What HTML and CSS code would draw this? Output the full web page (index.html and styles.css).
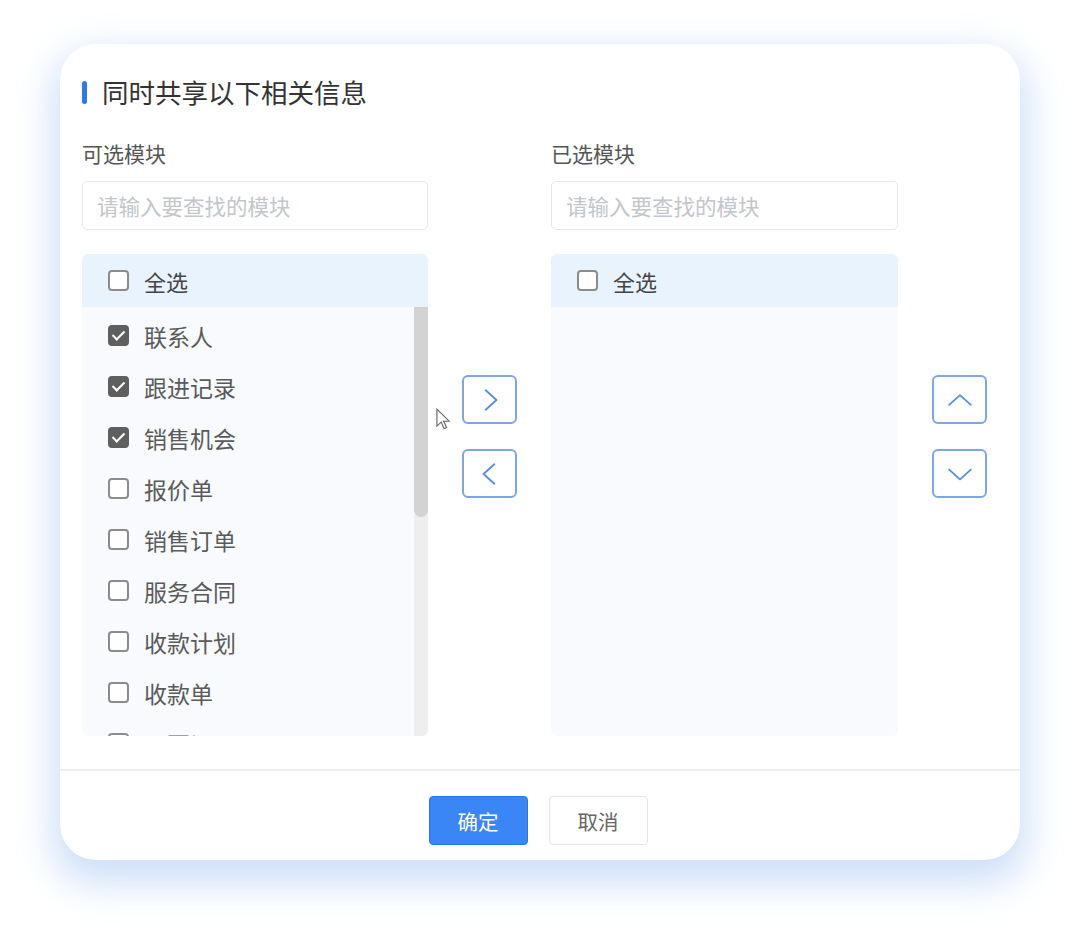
FILE: index.html
```html
<!DOCTYPE html>
<html lang="zh-CN">
<head>
  <meta charset="UTF-8">
  <title>共享信息</title>
  <link rel="stylesheet" href="styles.css">
</head>
<body>

<div class="dialog">
  <div class="dialog-body">
    <h2 class="section-title">同时共享以下相关信息</h2>

    <div class="transfer">
      <!-- 左侧：可选模块 -->
      <div class="panel">
        <div class="panel-label">可选模块</div>
        <input class="search" type="text" placeholder="请输入要查找的模块">
        <div class="list">
          <div class="list-head">
            <span class="check"></span>
            <span>全选</span>
          </div>
          <div class="list-body">
            <div class="rows">
              <div class="row"><span class="check checked"></span><span>联系人</span></div>
              <div class="row"><span class="check checked"></span><span>跟进记录</span></div>
              <div class="row"><span class="check checked"></span><span>销售机会</span></div>
              <div class="row"><span class="check"></span><span>报价单</span></div>
              <div class="row"><span class="check"></span><span>销售订单</span></div>
              <div class="row"><span class="check"></span><span>服务合同</span></div>
              <div class="row"><span class="check"></span><span>收款计划</span></div>
              <div class="row"><span class="check"></span><span>收款单</span></div>
              <div class="row"><span class="check"></span><span>开票记录</span></div>
            </div>
            <div class="scrollbar"><div class="thumb"></div></div>
          </div>
        </div>
      </div>

      <div class="ops">
        <button class="op-btn">
          <svg viewBox="0 0 24 24"><path d="M8 3l10 9-10 9"/></svg>
        </button>
        <button class="op-btn">
          <svg viewBox="0 0 24 24"><path d="M16 3L6 12l10 9"/></svg>
        </button>
        <svg class="cursor" viewBox="0 0 16 24">
          <path d="M1 1v18l4.5-4.2 3.2 7 2.6-1.2-3.1-6.8H14z"/>
        </svg>
      </div>

      <!-- 右侧：已选模块 -->
      <div class="panel">
        <div class="panel-label">已选模块</div>
        <input class="search" type="text" placeholder="请输入要查找的模块">
        <div class="list">
          <div class="list-head">
            <span class="check"></span>
            <span>全选</span>
          </div>
          <div class="list-body"></div>
        </div>
      </div>

      <div class="ops">
        <button class="op-btn">
          <svg viewBox="0 0 24 24"><path d="M2 16.5l10-9 10 9"/></svg>
        </button>
        <button class="op-btn">
          <svg viewBox="0 0 24 24"><path d="M2 8l10 9 10-9"/></svg>
        </button>
      </div>
    </div>
  </div>

  <div class="dialog-footer">
    <button class="btn btn-primary">确定</button>
    <button class="btn">取消</button>
  </div>
</div>

</body>
</html>
```

FILE: styles.css
```css
body {
  margin: 0;
  padding: 44px 0 74px 60px;
  min-height: 934px;
  box-sizing: border-box;
  background: #ffffff;
  font-family: "Noto Sans CJK SC", "Noto Sans", sans-serif;
  color: #333333;
}

.dialog {
  width: 960px;
  height: 816px;
  background: #ffffff;
  border-radius: 36px;
  box-shadow: 0 16px 36px 8px rgba(110, 160, 235, 0.33);
  display: flex;
  flex-direction: column;
  overflow: hidden;
}

.dialog-body {
  flex: 1;
  padding: 32px 22px 0 22px;
}

.section-title {
  margin: 0;
  display: flex;
  align-items: center;
  gap: 15px;
  font-size: 26.5px;
  font-weight: normal;
  line-height: 32px;
  color: #333333;
}

.section-title::before {
  content: "";
  width: 5px;
  height: 23px;
  border-radius: 3px;
  background: #2f78e8;
}

.transfer {
  display: flex;
  margin-top: 31px;
}

.panel {
  width: 346px;
  flex-shrink: 0;
}

.panel + .ops + .panel {
  width: 347px;
}

.panel-label {
  font-size: 21px;
  line-height: 28px;
  color: #555555;
}

.search {
  display: block;
  box-sizing: border-box;
  width: 100%;
  height: 49px;
  margin-top: 14px;
  padding: 0 14px;
  border: 1px solid #e6e8eb;
  border-radius: 5px;
  font-family: inherit;
  font-size: 21.5px;
  outline: none;
}

.search::placeholder {
  color: #c3c6cc;
}

.list {
  margin-top: 24px;
  height: 482px;
  border-radius: 6px;
  overflow: hidden;
  background: #f8fafd;
  display: flex;
  flex-direction: column;
}

.list-head {
  height: 53px;
  flex-shrink: 0;
  display: flex;
  align-items: center;
  gap: 15px;
  padding-left: 26px;
  background: #e9f3fe;
  font-size: 22px;
  color: #444444;
}

.list-body {
  flex: 1;
  min-height: 0;
  display: flex;
}

.rows {
  flex: 1;
  overflow: hidden;
  padding-top: 3px;
}

.scrollbar {
  width: 14px;
  background: #eeeeee;
}

.thumb {
  height: 210px;
  border-radius: 0 0 7px 7px;
  background: #d3d3d3;
}

.row {
  height: 51px;
  display: flex;
  align-items: center;
  gap: 15px;
  padding-left: 26px;
  font-size: 23px;
  color: #5a5a5a;
}

.check {
  box-sizing: border-box;
  width: 21px;
  height: 21px;
  border: 2px solid #8c8c8c;
  border-radius: 4px;
  background: #ffffff;
  flex-shrink: 0;
  position: relative;
}

.check.checked {
  background: #5f5f5f;
  border-color: #5f5f5f;
}

.check.checked::after {
  content: "";
  position: absolute;
  left: 5px;
  top: 1px;
  width: 5px;
  height: 10px;
  border: solid #ffffff;
  border-width: 0 2.5px 2.5px 0;
  transform: rotate(45deg);
}

.ops {
  width: 55px;
  margin: 0 34px;
  flex-shrink: 0;
  padding-top: 236px;
  display: flex;
  flex-direction: column;
  gap: 25px;
  position: relative;
}

.ops:last-child {
  margin-right: 0;
}

.op-btn {
  width: 55px;
  height: 49px;
  padding: 0;
  border: 2px solid #7ea6e6;
  border-radius: 6px;
  background: #ffffff;
  display: flex;
  align-items: center;
  justify-content: center;
  cursor: pointer;
}

.op-btn svg {
  width: 26px;
  height: 26px;
  fill: none;
  stroke: #5b8de0;
  stroke-width: 1.7;
  stroke-linecap: round;
  stroke-linejoin: round;
}

.cursor {
  position: absolute;
  left: -26px;
  top: 269px;
  width: 15px;
  height: 23px;
  fill: #ffffff;
  stroke: #666666;
  stroke-width: 1.2;
}

.dialog-footer {
  height: 91px;
  border-top: 2px solid #eeeeee;
  display: flex;
  justify-content: center;
  align-items: flex-start;
  gap: 21px;
  padding: 25px 4px 0 0;
  box-sizing: border-box;
}

.btn {
  width: 99px;
  height: 49px;
  border: 1px solid #e3e5e8;
  border-radius: 4px;
  background: #ffffff;
  font-family: inherit;
  font-size: 20.5px;
  color: #666666;
  cursor: pointer;
}

.btn-primary {
  background: #3a86f6;
  border-color: #2f76e4;
  color: #ffffff;
}
```
